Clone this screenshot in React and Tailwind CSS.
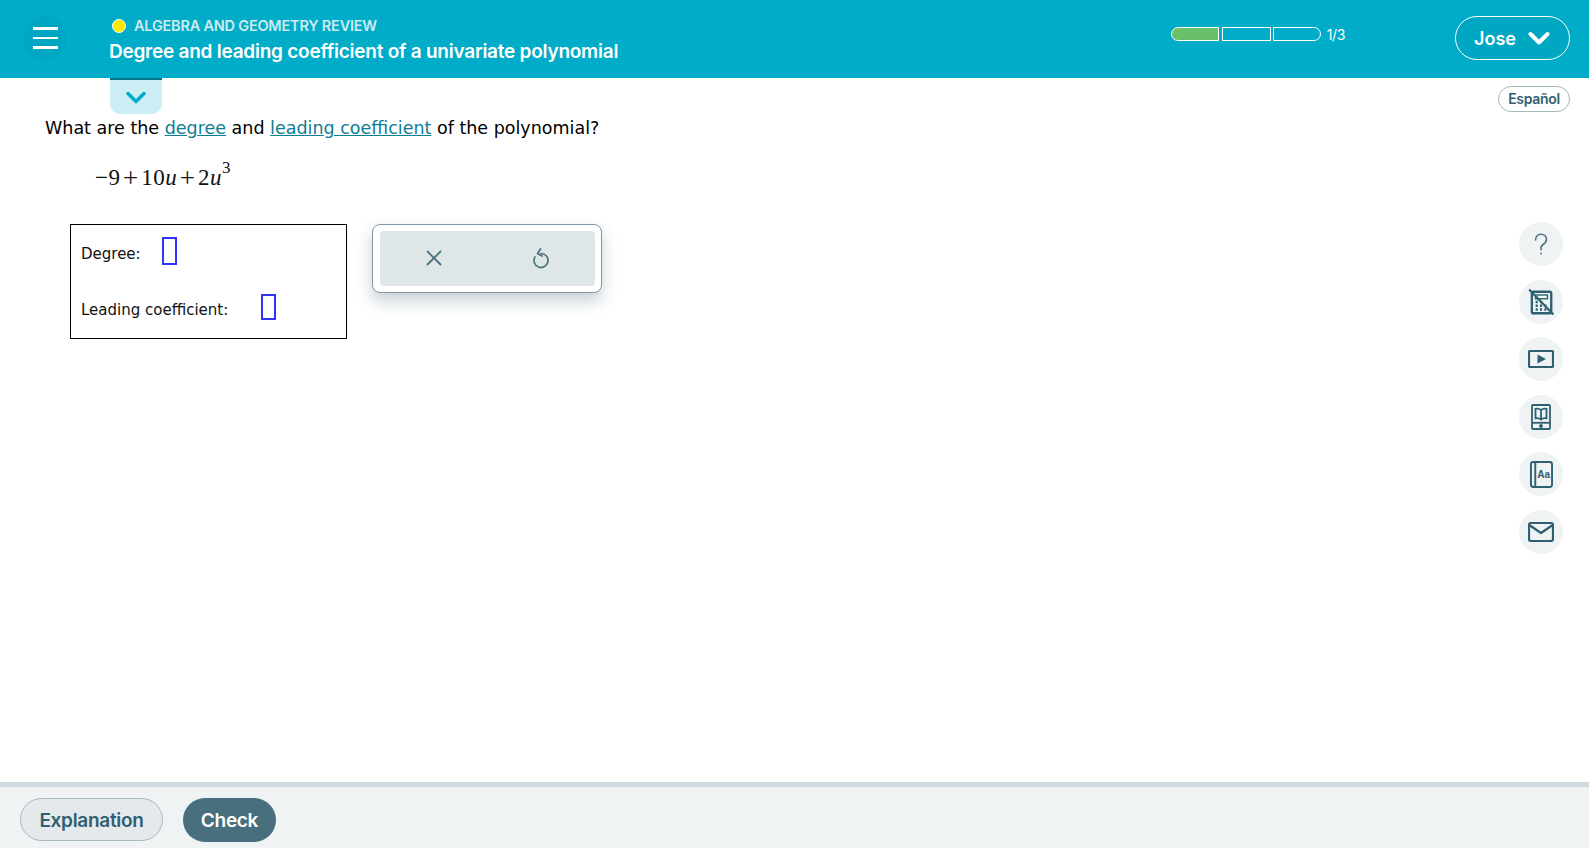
const headFont = "font-['Inter',sans-serif]";

const SideIcon = ({ children, className = '' }) => (
  <button className={`w-[44px] h-[44px] rounded-full bg-[#eff3f4] flex items-center justify-center text-[#2f6071] ${className}`}>
    {children}
  </button>
);

const QuestionIcon = () => (
  <svg width="26" height="26" viewBox="0 0 24 24" fill="none" stroke="#4a7280" strokeWidth="1.500" strokeLinecap="round">
    <path d="M7 8.200C7 5.200 9.200 3 12 3s5 2 5 4.800c0 2.200-1.200 3.300-2.800 4.400-1.400 1-2.200 1.800-2.200 3.600v1.400" />
    <path d="M12 20.500v.6" />
  </svg>
);

const CalculatorIcon = () => (
  <svg width="28" height="28" viewBox="0 0 26 26" fill="none" stroke="#2f6071" strokeWidth="1.700">
    <rect x="4.500" y="3.500" width="18" height="20" rx="1.500" strokeWidth="2.200" />
    <rect x="8" y="6.500" width="11" height="3.500" strokeWidth="1.300" />
    <path d="M8 13h2M12 13h2M8 16.500h2M12 16.500h2M8 20h2M12 20h2M16 16.500h2M16 20h2" strokeWidth="2.200" />
    <path d="M2 1.500 24.500 24.500" strokeWidth="2" />
  </svg>
);

const VideoIcon = () => (
  <svg width="26" height="20" viewBox="0 0 26 20" fill="none">
    <rect x="1" y="2" width="24" height="16" rx="0.800" stroke="#2f6071" strokeWidth="2.200" />
    <path d="M9.500 5.500 18 10l-8.500 4.500z" fill="#2f6071" />
  </svg>
);

const TextbookIcon = () => (
  <svg width="20" height="26" viewBox="0 0 20 26" fill="none" stroke="#2f6071" strokeWidth="1.800">
    <rect x="1" y="1" width="18" height="24" rx="1" />
    <path d="M1 18.800h18" />
    <path d="M10 6c-1.500-1.200-3.500-1.500-5.500-1.200v9.500c2-.3 4 0 5.500 1.200 1.500-1.200 3.500-1.500 5.500-1.200V4.800C13.500 4.500 11.500 4.800 10 6zM10 6v9.500" />
    <circle cx="10" cy="22" r="1" fill="#2f6071" />
  </svg>
);

const GlossaryIcon = () => (
  <svg width="23" height="27" viewBox="0 0 24 28" fill="none">
    <rect x="1" y="1" width="22" height="26" rx="2.500" stroke="#2f6071" strokeWidth="2" />
    <path d="M5.500 1v26" stroke="#2f6071" strokeWidth="2" />
    <text x="7.500" y="18" fontSize="10.500" fontWeight="700" fill="#2f6071" fontFamily="Liberation Sans, sans-serif">Aa</text>
  </svg>
);

const MailIcon = () => (
  <svg width="26" height="20" viewBox="0 0 26 20" fill="none" stroke="#2f6071" strokeWidth="2.200" strokeLinejoin="round" strokeLinecap="round">
    <rect x="1" y="1" width="24" height="18" rx="2" />
    <path d="M2 3.500 13 11 24 3.500" />
  </svg>
);

const App = () => {
  return (
    <div className="w-[1589px] h-[848px] flex flex-col overflow-hidden bg-white relative">
      <header className="h-[78px] shrink-0 bg-[#00acc8] flex items-center text-white relative z-10">
        <button className="w-[44px] h-[44px] ml-[23px] mb-[2px] rounded-full bg-[#00a7c2] flex flex-col items-center justify-center gap-[7px]">
          <span className="block w-[25px] h-[2.500px] bg-white"></span>
          <span className="block w-[25px] h-[2.500px] bg-white"></span>
          <span className="block w-[25px] h-[2.500px] bg-white"></span>
        </button>
        <div className={`ml-[42px] mt-[3px] ${headFont}`}>
          <div className="flex items-center h-[20px] pl-[3px]">
            <span className="w-[14px] h-[14px] rounded-full bg-[#ffe900] border border-white"></span>
            <span className="ml-[8px] text-[14.500px] font-semibold tracking-[-0.220px] text-[#ccecf2]">ALGEBRA AND GEOMETRY REVIEW</span>
          </div>
          <div className="text-[19px] font-semibold leading-[28px] mt-[2px] tracking-[-0.240px]">Degree and leading coefficient of a univariate polynomial</div>
        </div>
        <div className="ml-auto flex items-center mb-[10px]">
          <div className="w-[48px] h-[14px] rounded-l-full bg-[#6abf69] border border-white"></div>
          <div className="w-[49px] h-[14px] border border-white ml-[3px]"></div>
          <div className="w-[48px] h-[14px] border border-white rounded-r-full ml-[2px]"></div>
          <span className={`ml-[6px] text-[14px] ${headFont} tracking-[-0.4px]`}>1/3</span>
        </div>
        <button className={`ml-[110px] mr-[19px] mb-[2px] w-[115px] h-[44px] rounded-full border border-white bg-[#00a7c2] flex items-center pl-[18px] gap-[12px] text-[18px] font-semibold ${headFont}`}>
          Jose
          <svg width="22" height="14" viewBox="0 0 22 14" fill="none" stroke="white" strokeWidth="4" strokeLinecap="round" strokeLinejoin="round">
            <path d="M2.500 3 11 11.500 19.500 3" />
          </svg>
        </button>
      </header>

      {/* drawer tab hangs off the header */}
      <div className="absolute left-[110px] top-[78px] w-[52px] h-[36px] bg-[#cdeef4] rounded-b-[10px] border-t-2 border-[#04788c] flex items-center justify-center">
        <svg width="22" height="13" viewBox="0 0 22 13" fill="none" stroke="#00acc8" strokeWidth="3.500" strokeLinecap="round" strokeLinejoin="round">
          <path d="M3 2.500 11 10.500 19 2.500" />
        </svg>
      </div>

      <main className="flex-1 flex min-h-0">
        <div className="flex-1 pl-[45px] pt-[37px] font-['DejaVu_Sans',sans-serif]">
          <p className="text-[17.500px] leading-[26px] text-black">
            What are the <a className="text-[#0b7d95] underline">degree</a> and <a className="text-[#0b7d95] underline">leading coefficient</a> of the polynomial?
          </p>
          <div className="ml-[50px] mt-[11px] h-[40px] flex items-end font-['Liberation_Serif',serif] text-[23px] leading-[28px] tracking-[0.500px] text-[#111]">
            <span>−9</span>
            <span className="mx-[2.500px] text-[27px] leading-[28px]">+</span>
            <span>10<i>u</i></span>
            <span className="mx-[2.500px] text-[27px] leading-[28px]">+</span>
            <span>2<i>u</i><sup className="text-[17px] relative top-[-12px] align-baseline">3</sup></span>
          </div>
          <div className="flex items-start ml-[25px] mt-[32px]">
            <div className="w-[277px] h-[115px] border border-black pl-[10px] text-[15px] text-[#111] flex flex-col justify-start">
              <div className="flex items-center mt-[12px] h-[28px]">
                <span className="mt-[6px]">Degree:</span>
                <span className="ml-[21px] w-[15px] h-[28px] border-2 border-[#3333ff]"></span>
              </div>
              <div className="flex items-center mt-[29px] h-[26px]">
                <span className="mt-[6px]">Leading coefficient:</span>
                <span className="ml-[33px] w-[15px] h-[26px] border-2 border-[#3333ff]"></span>
              </div>
            </div>
            <div className="ml-[25px] w-[230px] h-[69px] rounded-[8px] border border-[#7d98a3] bg-white pl-[7px] pr-[6px] py-[6px] shadow-[0_8px_16px_rgba(70,100,115,0.3)]">
              <div className="h-full rounded-[4px] bg-[#dfe6e8] flex items-center">
                <svg className="ml-[45px] mb-[2px]" width="18" height="18" viewBox="0 0 18 18" fill="none" stroke="#4a7280" strokeWidth="1.800">
                  <path d="M2 2 16 16M16 2 2 16" />
                </svg>
                <svg className="ml-[89px]" width="18" height="22" viewBox="0 0 18 22" fill="none" stroke="#4a7280" strokeWidth="1.700" strokeLinecap="round" strokeLinejoin="round">
                  <path d="M9 5.500a7 7 0 1 1-6 3.400" />
                  <path d="M8.500 1 5.500 5.500l4.500 2.500" />
                </svg>
              </div>
            </div>
          </div>
        </div>
        <aside className="w-[96px] shrink-0 flex flex-col items-end pr-[19px]">
          <button className={`mt-[8px] h-[26px] w-[72px] pb-[1px] rounded-full border border-[#a5b9c1] text-[14px] font-semibold text-[#2f6071] tracking-[-0.3px] ${headFont}`}>Español</button>
          <div className="mt-[110px] flex flex-col gap-[13.600px] mr-[7px]">
            <SideIcon><QuestionIcon /></SideIcon>
            <SideIcon><CalculatorIcon /></SideIcon>
            <SideIcon><VideoIcon /></SideIcon>
            <SideIcon><TextbookIcon /></SideIcon>
            <SideIcon><GlossaryIcon /></SideIcon>
            <SideIcon><MailIcon /></SideIcon>
          </div>
        </aside>
      </main>

      <footer className={`h-[66px] shrink-0 border-t-[5px] border-[#d0d9de] bg-[#eff3f4] flex items-center pl-[20px] pt-[4px] gap-[20px] text-[19px] font-semibold ${headFont}`}>
        <button className="w-[143px] h-[43px] pt-[3px] rounded-full border border-[#a5b9c1] bg-[#e4e9eb] text-[#2f6071] tracking-[-0.3px]">Explanation</button>
        <button className="w-[93px] h-[44px] pt-[3px] rounded-full bg-[#486f7d] text-white tracking-[-0.3px]">Check</button>
      </footer>
    </div>
  );
};

export default App;
